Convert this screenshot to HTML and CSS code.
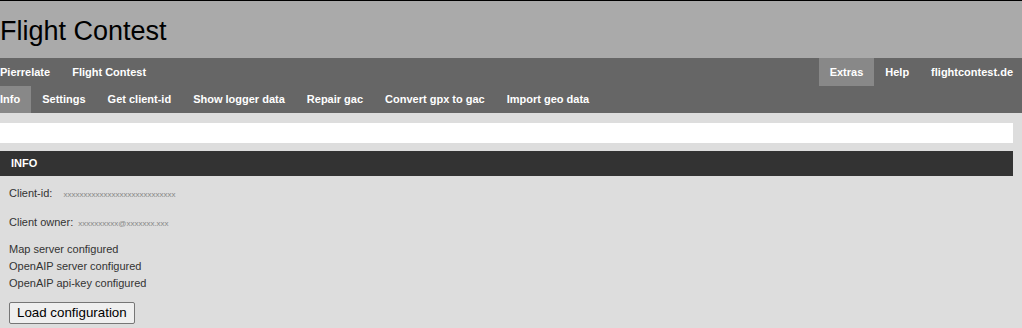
FILE: index.html
```html
<!DOCTYPE html>
<html lang="en">
<head>
    <meta charset="UTF-8">
    <title>Flight Contest - Extras</title>
    <link rel="stylesheet" href="styles.css">
</head>
<body>
    <!-- Header -->
    <div class="header">
        <h1>Flight Contest</h1>
    </div>

    <!-- Main navigation -->
    <div class="nav">
        <ul class="menu">
            <li><a href="#">Pierrelate</a></li>
            <li><a href="#">Flight Contest</a></li>
        </ul>
        <ul class="menu menu-right">
            <li class="active"><a href="#">Extras</a></li>
            <li><a href="#">Help</a></li>
            <li><a href="#">flightcontest.de</a></li>
        </ul>
    </div>
    <div class="nav">
        <ul class="menu">
            <li class="active"><a href="#">Info</a></li>
            <li><a href="#">Settings</a></li>
            <li><a href="#">Get client-id</a></li>
            <li><a href="#">Show logger data</a></li>
            <li><a href="#">Repair gac</a></li>
            <li><a href="#">Convert gpx to gac</a></li>
            <li><a href="#">Import geo data</a></li>
        </ul>
    </div>

    <!-- Content -->
    <div class="content">
        <div class="message-box"></div>
        <div class="box">
            <div class="box-title">INFO</div>
            <div class="box-body">
                <p class="field">Client-id: <span class="value">xxxxxxxxxxxxxxxxxxxxxxxxxxxx</span></p>
                <p class="field">Client owner: <span class="value value-owner">xxxxxxxxxx@xxxxxxx.xxx</span></p>
                <div class="status">
                    <div>Map server configured</div>
                    <div>OpenAIP server configured</div>
                    <div>OpenAIP api-key configured</div>
                </div>
                <button class="btn" type="button">Load configuration</button>
            </div>
        </div>
    </div>
</body>
</html>
```

FILE: styles.css
```css
body {
    margin: 0;
    font-family: "Liberation Sans", Arial, sans-serif;
    background: #ddd;
    color: #333;
    border-top: 1px solid #000;
    overflow: hidden;
}
.header {
    background: #aaa;
    height: 57px;
    display: flex;
    align-items: center;
}
.header h1 {
    margin: 4px 0 0 0;
    font-size: 27px;
    font-weight: normal;
    color: #000;
}
.nav {
    background: #666;
    display: flex;
    justify-content: space-between;
    margin-left: -11px;
    margin-right: -2px;
}
.menu {
    list-style: none;
    margin: 0;
    padding: 0;
    display: flex;
}
.menu li a {
    display: block;
    padding: 0 11px;
    line-height: 28px;
    font-size: 11px;
    font-weight: bold;
    color: #fff;
    text-decoration: none;
}
.nav + .nav .menu li a {
    line-height: 27px;
}
.menu li.active a {
    background: #888;
}
.content {
    padding: 10px 9px 0 0;
}
.message-box {
    background: #fff;
    height: 20px;
    margin-bottom: 8px;
}
.box-title {
    background: #333;
    color: #fff;
    font-size: 11px;
    font-weight: bold;
    line-height: 25px;
    padding-left: 11px;
}
.box-body {
    padding: 11px 9px;
    font-size: 11px;
}
.field {
    margin: 0 0 15px 0;
    line-height: 13px;
}
.field + .field {
    margin-bottom: 0;
}
.value {
    font-size: 8px;
    color: #888;
    margin-left: 8px;
}
.value-owner {
    margin-left: 2px;
}
.status {
    margin-top: 11px;
    line-height: 17px;
}
.btn {
    display: block;
    margin-top: 10px;
    font-family: "Liberation Sans", Arial, sans-serif;
    font-size: 13.33px;
    color: #000;
    background: #efefef;
    border: 1px solid #767676;
    border-radius: 2px;
    padding: 2px 7px 3px;
}
```
